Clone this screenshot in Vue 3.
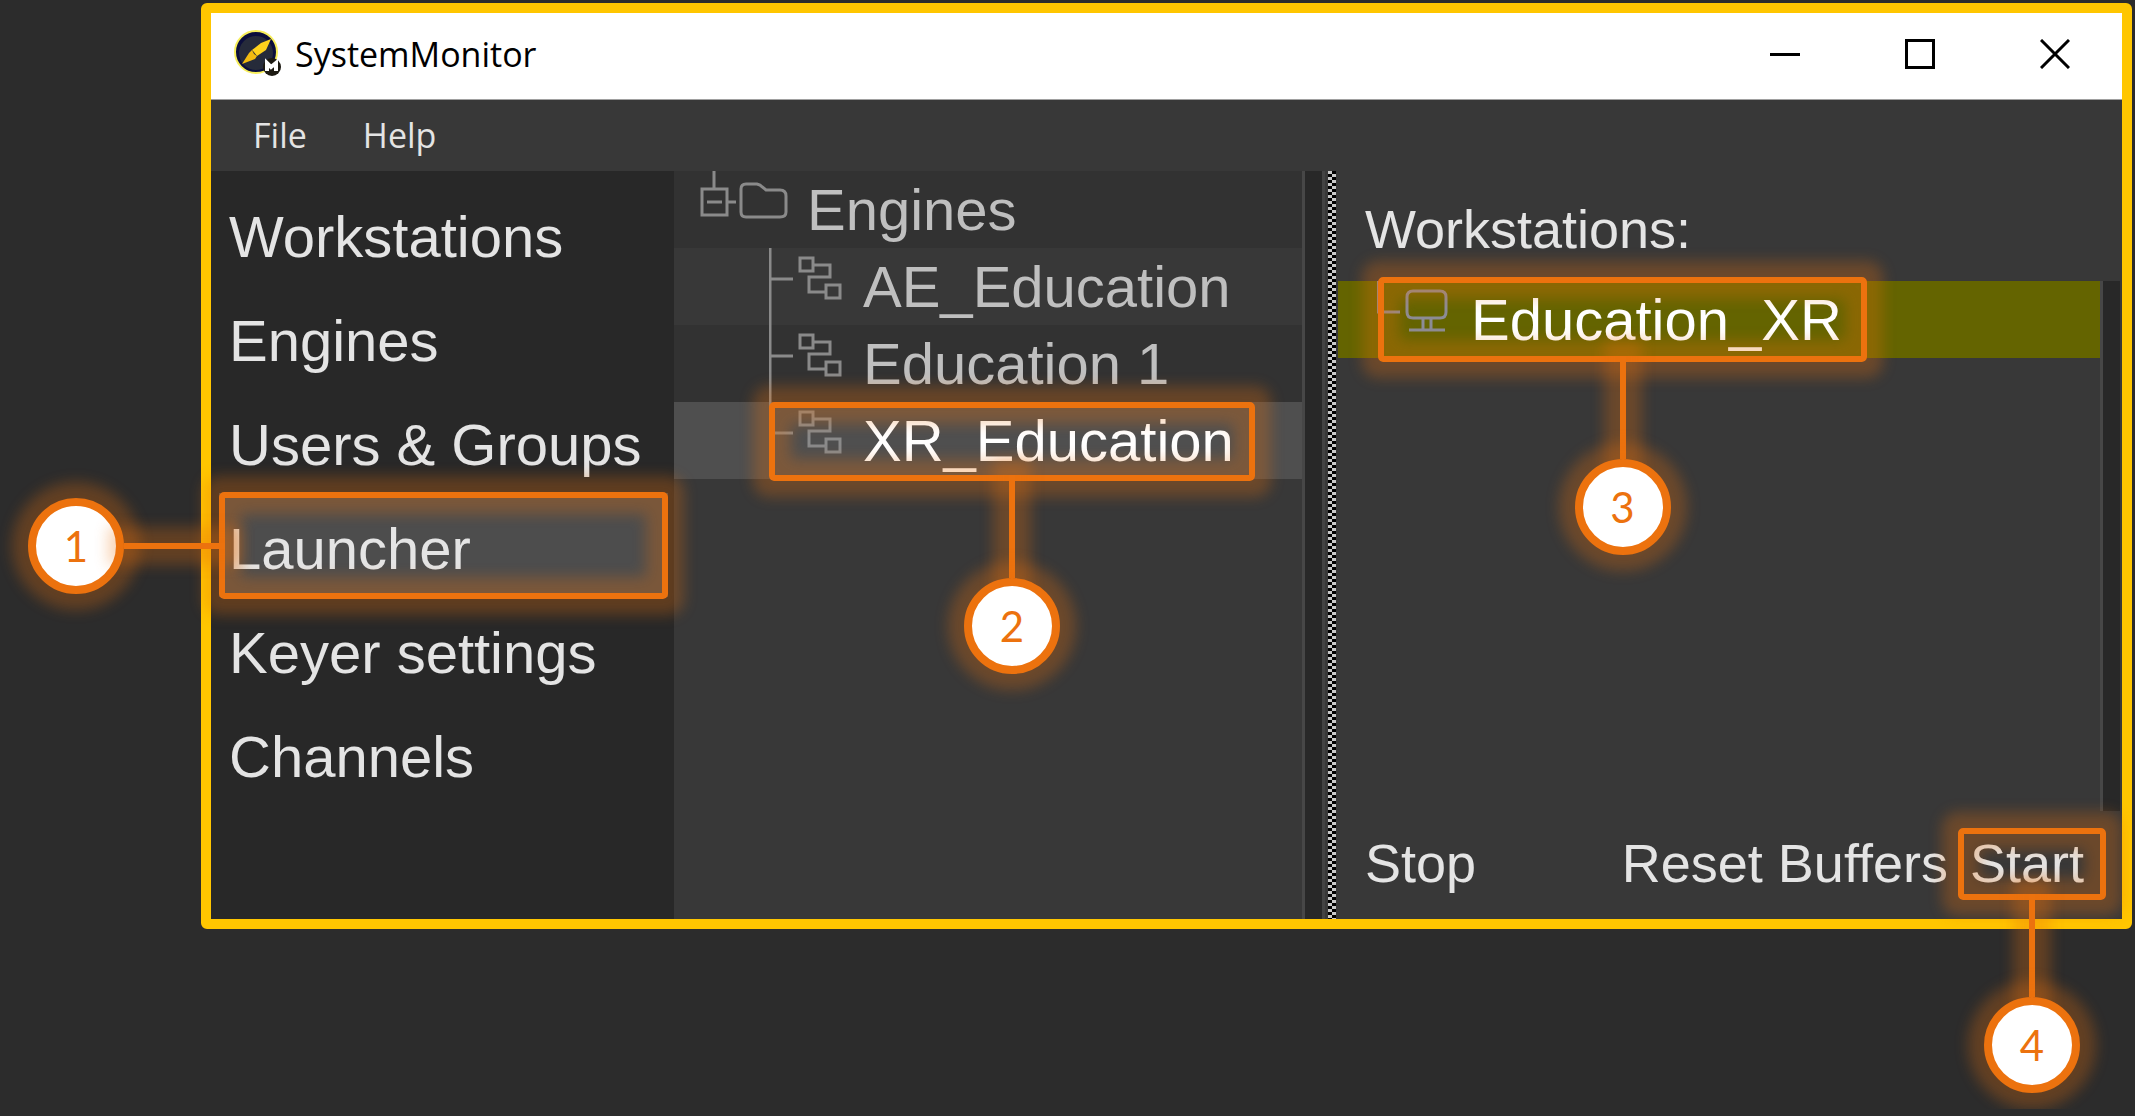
<script setup>
const sections = ['Workstations', 'Engines', 'Users & Groups', 'Launcher', 'Keyer settings', 'Channels']
const engines = ['AE_Education', 'Education 1', 'XR_Education']
</script>

<template>
  <main class="page">
    <div class="window">
      <header class="titlebar">
        <svg class="logo" viewBox="0 0 48 48" aria-hidden="true">
          <circle cx="22" cy="22" r="21" fill="#0b0e3c" stroke="#f7ee5a" stroke-width="2" />
          <circle cx="22" cy="23" r="17" fill="#262b3a" />
          <path d="M37 9 32 20 23 26 18 20 27 13Z" fill="#ffd21c" />
          <path d="M8 34 15 23 18 20 23 26 21 29Z" fill="#f2bb10" />
          <path d="M18 20 23 26 20 24Z" fill="#262b3a" />
          <circle cx="38" cy="37" r="9" fill="#1d1a12" />
          <path d="M33 41V33L37 37 42 33V41" fill="none" stroke="#fff" stroke-width="4" />
        </svg>
        <h1>SystemMonitor</h1>
        <div class="controls">
          <button type="button" aria-label="Minimize">
            <svg viewBox="0 0 30 30"><path d="M0 15.500H30" /></svg>
          </button>
          <button type="button" aria-label="Maximize">
            <svg viewBox="0 0 30 30"><path d="M1.500 1.500H28.500V28.500H1.500Z" /></svg>
          </button>
          <button type="button" aria-label="Close">
            <svg viewBox="0 0 30 30"><path d="M1 1 29 29M29 1 1 29" /></svg>
          </button>
        </div>
      </header>

      <nav class="menubar" aria-label="Menu">
        <button type="button">File</button>
        <button type="button">Help</button>
      </nav>

      <div class="body">
        <nav class="sidebar" aria-label="Sections">
          <a v-for="name in sections" :key="name" href="#" :class="{ active: name === 'Launcher' }">
            {{ name }}
            <span v-if="name === 'Launcher'" class="callout callout-nav">
              <span class="badge">1</span>
              <span class="link"></span>
            </span>
          </a>
        </nav>

        <section class="tree" aria-label="Engines">
          <div class="row root">
            <svg class="root-icon" viewBox="0 0 90 77" aria-hidden="true">
              <path d="M14 0V18M28 31H36" />
              <path d="M2 18H27V44H2ZM7 31H22" />
              <path d="M46 13H57L60 14 66 19H80Q86 19 86 25V41Q86 46 80 46H46Q41 46 41 41V18Q41 13 46 13Z" />
            </svg>
            <span>Engines</span>
          </div>
          <div
            v-for="name in engines"
            :key="name"
            class="row"
            :class="{ selected: name === 'XR_Education' }"
          >
            <svg class="node-icon" viewBox="0 0 74 77" aria-hidden="true">
              <path :d="name === 'XR_Education' ? 'M1 0V31H24' : 'M1 0V77M1 31H24'" />
              <path d="M31 10H44V23H31ZM44 17H61V29H40V44H57M57 37H71V50H57Z" />
            </svg>
            <span>{{ name }}</span>
            <span v-if="name === 'XR_Education'" class="callout callout-engine">
              <span class="link"></span>
              <span class="badge">2</span>
            </span>
          </div>
        </section>

        <div class="gutter"></div>
        <div class="splitter"></div>

        <section class="stations">
          <h2>Workstations:</h2>
          <div class="list">
            <div class="items">
              <div class="row station">
                <svg class="station-icon" viewBox="0 0 74 77" aria-hidden="true">
                  <path d="M1 0V31H23" />
                  <path d="M36 10H63Q69 10 69 16V31Q69 37 63 37H36Q30 37 30 31V16Q30 10 36 10ZM46 38V48M54 38V48M32 49H68" />
                </svg>
                <span>Education_XR</span>
                <span class="callout callout-station">
                  <span class="link"></span>
                  <span class="badge">3</span>
                </span>
              </div>
            </div>
            <div class="scrollbar"></div>
          </div>
          <footer class="actions">
            <button type="button" class="stop">Stop</button>
            <button type="button">Reset Buffers</button>
            <button type="button" class="start">
              Start
              <span class="callout callout-start">
                <span class="link"></span>
                <span class="badge">4</span>
              </span>
            </button>
          </footer>
        </section>
      </div>
    </div>
  </main>
</template>

<style>
body {
  background: #2c2c2c;
}
</style>

<style scoped>
.page {
  padding: 3px 3px 180px 201px;
  font-family: "Liberation Sans", Arial, sans-serif;
  color: #e4e4e4;
}

.window {
  border: 10px solid #ffc600;
  border-radius: 6px;
  background: #383838;
}

button {
  border: 0;
  padding: 0;
  background: none;
  color: inherit;
  font: inherit;
}

.titlebar {
  display: flex;
  align-items: center;
  box-sizing: border-box;
  height: 87px;
  padding: 0 52px 5px 23px;
  border-bottom: 1px solid #a0a0a0;
  background: #fff;
  color: #000;
}

.logo {
  width: 48px;
  height: 48px;
}

.titlebar h1 {
  margin: 0 0 0 13px;
  font: 400 34px/48px "Open Sans", "Noto Sans", sans-serif;
}

.controls {
  display: flex;
  gap: 105px;
  margin-left: auto;
}

.controls button {
  display: flex;
}

.controls svg {
  width: 30px;
  height: 30px;
  fill: none;
  stroke: #000;
  stroke-width: 3;
}

.menubar {
  display: flex;
  gap: 56px;
  height: 71px;
  padding-left: 42px;
}

.menubar button {
  font: 400 34px/71px "Open Sans", "Noto Sans", sans-serif;
}

.body {
  display: flex;
  min-height: 748px;
}

.sidebar {
  position: relative;
  z-index: 2;
  flex: 0 0 463px;
  box-sizing: border-box;
  padding-top: 10px;
  background: #282828;
}

.sidebar a {
  position: relative;
  display: block;
  margin: 0 6px 0 8px;
  padding: 8px 0 0 10px;
  color: inherit;
  font-size: 58px;
  line-height: 96px;
  text-decoration: none;
  white-space: nowrap;
}

.sidebar .active {
  background: #4d4d4d;
}

.tree {
  flex: 0 0 628px;
  border-right: 3px solid #474747;
}

.row {
  position: relative;
  display: flex;
  height: 77px;
  font-size: 58px;
  line-height: 77px;
  white-space: nowrap;
}

.tree .row {
  padding-left: 95px;
  color: #bfbfbf;
}

.tree .row:nth-child(odd) {
  background: #323232;
}

.tree .root {
  padding-left: 26px;
}

.tree .selected {
  background: #4f4f4f;
  color: #fff;
}

.row svg {
  flex: none;
  height: 77px;
  fill: none;
  stroke: #8a8a8a;
  stroke-width: 3;
}

.root-icon {
  width: 90px;
  margin-right: 17px;
}

.node-icon {
  width: 74px;
  margin-right: 20px;
}

.gutter {
  flex: 0 0 17px;
  margin-right: 3px;
  border-right: 3px solid #434343;
  background: #282828;
}

.splitter {
  flex: 0 0 8px;
  background: repeating-conic-gradient(#000 0 25%, #c8c8c8 0 50%) 0 0 / 8px 6px;
}

.stations {
  display: flex;
  flex: 1;
  flex-direction: column;
  min-width: 0;
}

.stations h2 {
  margin: 0;
  padding: 23px 0 17px 29px;
  font-size: 54px;
  font-weight: 400;
  line-height: 70px;
}

.list {
  display: flex;
  flex: 1;
  padding: 0 2px;
}

.items {
  flex: 1;
  border-right: 3px solid #474747;
}

.station {
  padding-left: 39px;
  background: #646400;
  color: #fff;
}

.station-icon {
  width: 74px;
  margin-right: 20px;
}

.row .station-icon {
  stroke: #8c8c96;
}

.scrollbar {
  width: 17px;
  background: #282828;
}

.actions {
  display: flex;
  padding: 17px 38px 21px 29px;
  font-size: 54px;
  line-height: 70px;
}

.stop {
  margin-right: auto;
}

.start {
  position: relative;
  margin-left: 22px;
}

.callout {
  position: absolute;
  z-index: 1;
  border: 6px solid #ec720e;
  border-radius: 5px;
  box-shadow: 0 0 14px 16px #ec720e4a, inset 0 0 14px 16px #ec720e4a;
  pointer-events: none;
}

.callout-nav {
  inset: -1px 0 -2px 0;
}

.callout-engine {
  inset: 0 47px -2px 95px;
}

.callout-station {
  inset: -4px 233px -4px 40px;
}

.callout-start {
  inset: 0 -22px -2px -12px;
}

.link {
  position: absolute;
  top: 100%;
  left: calc(50% - 3px);
  width: 6px;
  height: 103px;
  background: #ec720e;
  box-shadow: 0 0 14px 16px #ec720e4a;
}

.badge {
  position: absolute;
  top: calc(100% + 103px);
  left: calc(50% - 48px);
  box-sizing: border-box;
  width: 96px;
  height: 96px;
  border: 8px solid #ec720e;
  border-radius: 50%;
  background: #fff;
  box-shadow: 0 0 14px 16px #ec720e4a;
  color: #ec720e;
  font: 400 42px/80px Lato, sans-serif;
  text-align: center;
}

.callout-nav .badge {
  top: calc(50% - 48px);
  right: calc(100% + 101px);
  left: auto;
}

.callout-nav .link {
  top: calc(50% - 3px);
  right: 100%;
  left: auto;
  width: 101px;
  height: 6px;
}
</style>
